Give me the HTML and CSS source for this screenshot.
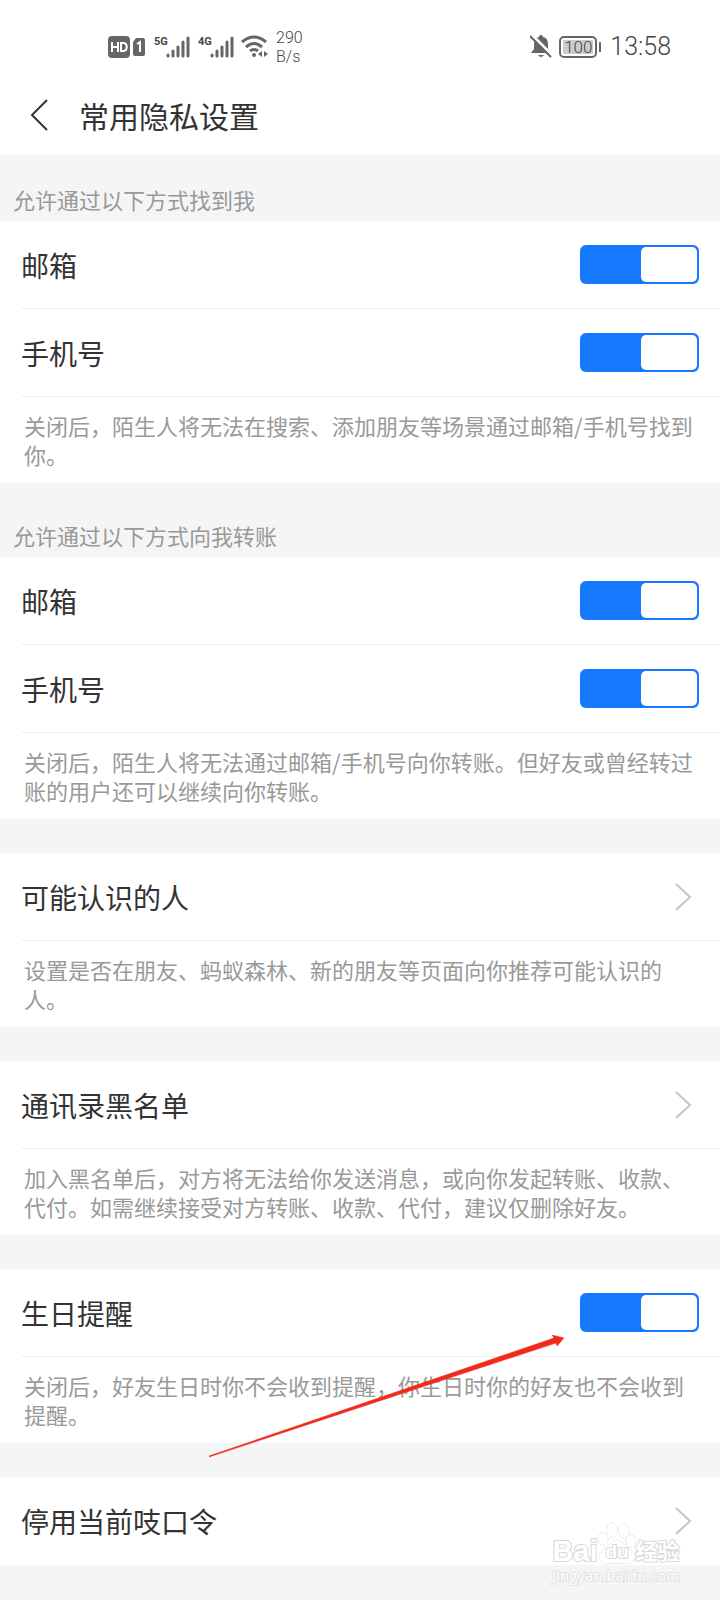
FILE: index.html
```html
<!DOCTYPE html>
<html lang="zh-CN">

<head>
  <meta charset="UTF-8">
  <meta name="viewport" content="width=device-width, initial-scale=1.0">
  <title>常用隐私设置</title>
  <link rel="stylesheet" href="styles.css">
</head>

<body>
  <div class="page">
    <div class="status-bar">
      <div class="status-left">
        <svg class="icon-hd" width="38" height="22" viewBox="0 0 38 22">
          <rect x="0" y="0" width="22" height="22" rx="4" fill="#666" />
          <path d="M4 6v10M10 6v10M4 11h6M13 7v8h2c5 0 5-8 0-8z" fill="none" stroke="#fff" stroke-width="2" />
          <path d="M28 2h7q2 0 2 2v14q0 2-2 2h-8q-2 0-2-2V6z" fill="#666" />
          <path d="M29 8l3-2v10" fill="none" stroke="#fff" stroke-width="2" />
        </svg>
        <div class="signal">
          <span class="net">5G</span>
          <svg width="24" height="22" viewBox="0 0 24 22">
            <path d="M2 19v1M7 15v5M12 11v9M17 6v14M22 2v18" stroke="#666" stroke-width="3" stroke-linecap="round" />
          </svg>
        </div>
        <div class="signal">
          <span class="net">4G</span>
          <svg width="24" height="22" viewBox="0 0 24 22">
            <path d="M2 19v1M7 15v5M12 11v9M17 6v14M22 2v18" stroke="#666" stroke-width="3" stroke-linecap="round" />
          </svg>
        </div>
        <svg class="icon-wifi" width="27" height="23" viewBox="0 0 27 23">
          <path d="M1 7q12-10 24 0M5 12q8-7 16 0M9 16q4-3 8 0" fill="none" stroke="#666" stroke-width="3" />
          <circle cx="13" cy="20" r="2" fill="#666" />
          <path d="M21 16v6l-4-3zM23 16v6l4-3z" fill="#666" />
        </svg>
        <div class="speed">290<br>B/s</div>
      </div>
      <div class="status-right">
        <svg width="22" height="24" viewBox="0 0 22 24">
          <path d="M1 18l3-4v-5q0-6 5-7 0-2 2-2t2 2q5 1 5 7v5l3 4z" fill="#666" />
          <path d="M8 20h6q-3 4-6 0z" fill="#666" />
          <path d="M2 0l21 21" stroke="#fff" stroke-width="3" />
          <path d="M0 1l21 21" stroke="#666" stroke-width="2" />
        </svg>
        <div class="battery"><span>100</span></div>
        <span class="time">13:58</span>
      </div>
    </div>

    <header class="header">
      <button class="back" aria-label="返回">
        <svg width="20" height="34" viewBox="0 0 20 34">
          <path d="M18 2L3 17l15 15" fill="none" stroke="#333" stroke-width="2" />
        </svg>
      </button>
      <h1>常用隐私设置</h1>
    </header>

    <main>
      <h2 class="group-title first">允许通过以下方式找到我</h2>
      <section class="card">
        <div class="row">
          <label for="find-mail">邮箱</label>
          <input class="switch" type="checkbox" id="find-mail" checked>
        </div>
        <div class="row">
          <label for="find-phone">手机号</label>
          <input class="switch" type="checkbox" id="find-phone" checked>
        </div>
        <p class="note">关闭后，陌生人将无法在搜索、添加朋友等场景通过邮箱/手机号找到你。</p>
      </section>

      <h2 class="group-title">允许通过以下方式向我转账</h2>
      <section class="card">
        <div class="row">
          <label for="pay-mail">邮箱</label>
          <input class="switch" type="checkbox" id="pay-mail" checked>
        </div>
        <div class="row">
          <label for="pay-phone">手机号</label>
          <input class="switch" type="checkbox" id="pay-phone" checked>
        </div>
        <p class="note">关闭后，陌生人将无法通过邮箱/手机号向你转账。但好友或曾经转过账的用户还可以继续向你转账。</p>
      </section>

      <section class="card gap">
        <a class="row link" href="#">
          可能认识的人
          <svg width="18" height="30" viewBox="0 0 18 30">
            <path d="M2 2l14 13L2 28" fill="none" stroke="#c4c4c4" stroke-width="2" />
          </svg>
        </a>
        <p class="note">设置是否在朋友、蚂蚁森林、新的朋友等页面向你推荐可能认识的人。</p>
      </section>

      <section class="card gap">
        <a class="row link" href="#">
          通讯录黑名单
          <svg width="18" height="30" viewBox="0 0 18 30">
            <path d="M2 2l14 13L2 28" fill="none" stroke="#c4c4c4" stroke-width="2" />
          </svg>
        </a>
        <p class="note">加入黑名单后，对方将无法给你发送消息，或向你发起转账、收款、代付。如需继续接受对方转账、收款、代付，建议仅删除好友。</p>
      </section>

      <section class="card gap">
        <div class="row">
          <label for="birthday">生日提醒</label>
          <input class="switch" type="checkbox" id="birthday" checked>
        </div>
        <p class="note">关闭后，好友生日时你不会收到提醒，你生日时你的好友也不会收到提醒。</p>
        <svg class="arrow" width="356" height="124" viewBox="0 0 356 124">
          <path d="M0 121L345 3l-2-3 12 3-7 8-1-3L0 122z" fill="#f02a1c" stroke="#f02a1c" stroke-width=".5" />
        </svg>
      </section>

      <section class="card gap">
        <a class="row link" href="#">
          停用当前吱口令
          <svg width="18" height="30" viewBox="0 0 18 30">
            <path d="M2 2l14 13L2 28" fill="none" stroke="#c4c4c4" stroke-width="2" />
          </svg>
        </a>
      </section>
    </main>

    <div class="watermark">
      <div class="mark-logo">
        <span class="mark-bai">Bai</span>
        <div class="paw">
          <svg width="38" height="42" viewBox="0 0 38 42">
            <g fill="#fff" stroke="#d8d8d8">
              <ellipse cx="5" cy="16" rx="5" ry="6" />
              <ellipse cx="14" cy="7" rx="5" ry="7" />
              <ellipse cx="26" cy="8" rx="5" ry="7" />
              <ellipse cx="33" cy="18" rx="5" ry="6" />
              <path d="M19 17c-5 0-7 5-11 8-6 4-8 7-6 11 3 7 10 4 17 4s14 3 17-4c2-4 0-7-6-11-4-3-6-8-11-8z" />
            </g>
          </svg>
          <span class="mark-du">du</span>
        </div>
        <span class="mark-cn">经验</span>
      </div>
      <div class="mark-url">jingyan.baidu.com</div>
    </div>
  </div>
</body>

</html>
```
FILE: styles.css
```css
* {
  margin: 0;
  padding: 0;
  box-sizing: border-box;
}

body {
  background-color: #f5f5f5;
  font-family: "Noto Sans CJK SC", sans-serif;
  color: #333;
}

svg {
  display: block;
  flex: none;
}

.page {
  position: relative;
  min-height: 100vh;
}

/* 状态栏 */
.status-bar {
  display: flex;
  justify-content: space-between;
  height: 77px;
  padding: 16px 49px 0 108px;
  background-color: #fff;
  font-family: Roboto, sans-serif;
  font-weight: 300;
  color: #444;
}

.status-left,
.status-right {
  display: flex;
  align-items: center;
}

.signal {
  display: flex;
  margin-left: 8px;
}

.net {
  width: 12px;
  font-size: 11px;
  font-weight: bold;
  line-height: 12px;
}

.icon-wifi {
  margin-left: 7px;
}

.speed {
  margin-left: 8px;
  font-size: 16px;
  line-height: 19px;
}

.battery {
  position: relative;
  width: 38px;
  height: 22px;
  margin: 0 13px 0 7px;
  padding: 2px;
  border: 2px solid #666;
  border-radius: 5px;
}

.battery span {
  display: block;
  background-color: #ccc;
  font-size: 17px;
  line-height: 14px;
  text-align: center;
}

.battery::after {
  content: "";
  position: absolute;
  top: 4px;
  right: -6px;
  width: 2px;
  height: 10px;
  background-color: #666;
}

.time {
  font-size: 25px;
}

/* 标题 */
.header {
  display: flex;
  align-items: center;
  height: 78px;
  padding: 0 29px 3px;
  background-color: #fff;
}

.back {
  margin-right: 30px;
  border: none;
  background: none;
}

.header h1 {
  font-size: 30px;
  font-weight: normal;
}

.group-title {
  padding: 37px 13px 7px;
  font-size: 22px;
  font-weight: normal;
  line-height: 30px;
  color: #999;
}

.group-title.first {
  padding-top: 29px;
}

/* 设置项 */
.card {
  position: relative;
  background-color: #fff;
}

.gap {
  margin-top: 34px;
}

.row {
  display: flex;
  align-items: center;
  justify-content: space-between;
  height: 88px;
  margin-left: 21px;
  padding-right: 21px;
  border-bottom: 1px solid #f0f0f0;
  font-size: 28px;
  color: #333;
  text-decoration: none;
}

.row:last-child {
  border-bottom: none;
}

.link {
  padding-right: 28px;
}

.switch {
  display: flex;
  width: 119px;
  height: 39px;
  padding: 2px;
  border-radius: 6px;
  background-color: #ccc;
  appearance: none;
}

.switch::before {
  content: "";
  width: 56px;
  border-radius: 5px;
  background-color: #fff;
}

.switch:checked {
  justify-content: flex-end;
  background-color: #1677ff;
}

.note {
  padding: 14px 20px 14px 24px;
  font-size: 22px;
  line-height: 29px;
  color: #999;
}

.arrow {
  position: absolute;
  top: 66px;
  left: 209px;
}

/* 水印 */
.watermark {
  position: absolute;
  right: 40px;
  bottom: 15px;
  font-family: "Liberation Sans", "Noto Sans CJK SC", sans-serif;
  color: #fff;
}

.mark-logo {
  display: flex;
  align-items: flex-end;
  font-weight: bold;
  -webkit-text-stroke: 2px #d8d8d8;
  paint-order: stroke fill;
}

.mark-bai {
  font-size: 29px;
  line-height: 28px;
}

.paw {
  position: relative;
}

.paw svg {
  overflow: visible;
}

.mark-du {
  position: absolute;
  bottom: 3px;
  left: 8px;
  font-size: 19px;
  line-height: 20px;
}

.mark-cn {
  font-size: 22px;
  line-height: 26px;
}

.mark-url {
  font-family: "Open Sans", sans-serif;
  font-size: 15px;
  line-height: 20px;
  text-align: right;
  -webkit-text-stroke: 2px #e2e2e2;
  paint-order: stroke fill;
}
```
